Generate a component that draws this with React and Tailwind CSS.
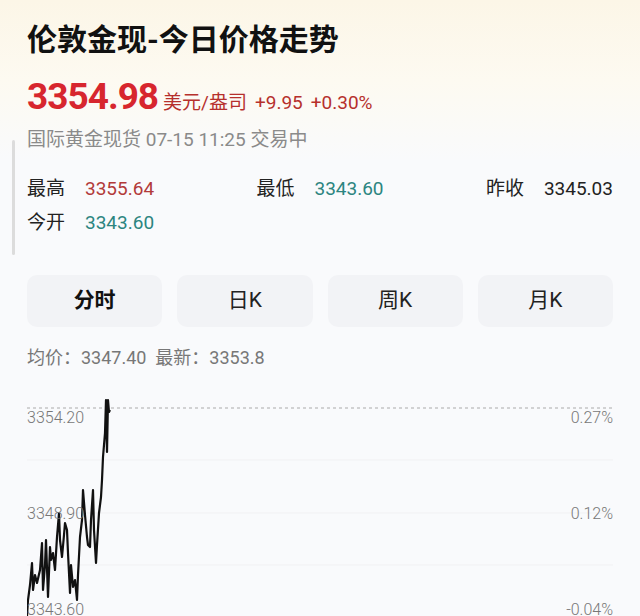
import React from 'react';

const font = { fontFamily: 'Roboto, "Noto Sans CJK SC", sans-serif' };

// 分时走势点位 (相对图表左上角)
const pts = [
    [0, 226], [1, 210], [3, 195], [5, 173], [6, 200], [8, 185], [10, 193], [13, 180], [15, 153],
    [16, 200], [18, 175], [19, 150], [21, 207], [23, 157], [24, 170], [26, 163], [28, 180],
    [30, 147], [32, 123], [33, 150], [35, 167], [37, 145], [38, 133], [40, 140], [41, 163],
    [43, 203], [44, 175], [46, 197], [48, 190], [50, 210], [51, 185], [53, 147], [55, 130],
    [56, 100], [58, 125], [60, 147], [61, 155], [63, 157], [64, 130], [66, 100], [67, 140],
    [69, 173], [70, 155], [72, 123], [74, 107], [75, 90], [76, 67], [78, 43], [79, 10],
    [80, 62], [81, 10], [82, 22], [83, 20],
];

const stats = [
    { label: '最高', value: '3355.64', color: 'text-[#b23a3a]' },
    { label: '最低', value: '3343.60', color: 'text-[#2c8580]' },
    { label: '昨收', value: '3345.03', color: 'text-[#222]' },
];

const tabs = ['分时', '日K', '周K', '月K'];

export default function App() {
    return (
        <div style={font} className="relative w-[640px] h-[616px] overflow-hidden bg-[#f9fafc]">
            <div className="absolute left-[12px] top-[140px] w-[3px] h-[115px] rounded bg-[#dcdcdc]" />

            <header className="bg-linear-to-b from-[#fcf6e7] via-[#fdfaf1] to-[#f9fafc] px-[27px] pt-[20px] pb-[6px]">
                <h1 className="text-[30px] leading-[40px] font-bold text-[#111]">伦敦金现-今日价格走势</h1>
                <div className="flex items-baseline gap-[5px] mt-[14px]">
                    <span className="text-[37px] leading-[46px] font-bold tracking-[-1px] text-[#d7262e]">3354.98</span>
                    <span className="text-[19px] text-[#b6302c]">美元/盎司</span>
                    <span className="text-[19px] text-[#b6302c] ml-[3px]">+9.95</span>
                    <span className="text-[19px] text-[#b6302c] ml-[3px]">+0.30%</span>
                </div>
                <p className="text-[19px] leading-[28px] text-[#8a8a8a] mt-[6px]">国际黄金现货 07-15 11:25 交易中</p>
            </header>

            <section className="px-[27px] pt-[12px]">
                <div className="flex justify-between h-[34px] items-center">
                    {stats.map((s) => (
                        <div key={s.label} className="flex items-center gap-[20px] text-[19px]">
                            <span className="text-[#222]">{s.label}</span>
                            <span className={s.color}>{s.value}</span>
                        </div>
                    ))}
                </div>
                <div className="flex h-[34px] items-center gap-[20px] text-[19px]">
                    <span className="text-[#222]">今开</span>
                    <span className="text-[#2c8580]">3343.60</span>
                </div>

                <div className="grid grid-cols-4 gap-[15px] mt-[35px]">
                    {tabs.map((t, i) => (
                        <div key={t} className={`h-[52px] rounded-[10px] bg-[#f2f3f6] flex items-center justify-center text-[21px] ${i === 0 ? 'font-bold text-[#111]' : 'text-[#222]'}`}>
                            {t}
                        </div>
                    ))}
                </div>

                <p className="text-[18px] leading-[28px] text-[#777] mt-[17px]">均价：3347.40&nbsp;&nbsp;最新：3353.8</p>

                <div className="relative h-[226px] mt-[18px]">
                    <svg width="586" height="226" className="absolute inset-0">
                        <line x1="0" y1="70" x2="586" y2="70" stroke="#f1f1f3" strokeWidth="1" />
                        <line x1="0" y1="123" x2="586" y2="123" stroke="#f1f1f3" strokeWidth="1" />
                        <line x1="0" y1="175" x2="586" y2="175" stroke="#f1f1f3" strokeWidth="1" />
                        <line x1="0" y1="18" x2="586" y2="18" stroke="#aaa" strokeWidth="1" strokeDasharray="3 3" />
                        <polyline points={pts.map((p) => p.join(',')).join(' ')} fill="none" stroke="#111" strokeWidth="2.2" strokeLinejoin="round" />
                    </svg>
                    <span className="absolute left-0 top-[18px] text-[16px] leading-[20px] font-light text-[#777]">3354.20</span>
                    <span className="absolute right-0 top-[18px] text-[16px] leading-[20px] font-light text-[#777]">0.27%</span>
                    <span className="absolute left-0 top-[114px] text-[16px] leading-[20px] font-light text-[#777]">3348.90</span>
                    <span className="absolute right-0 top-[114px] text-[16px] leading-[20px] font-light text-[#777]">0.12%</span>
                    <span className="absolute left-0 top-[210px] text-[16px] leading-[20px] font-light text-[#777]">3343.60</span>
                    <span className="absolute right-0 top-[210px] text-[16px] leading-[20px] font-light text-[#777]">-0.04%</span>
                </div>
            </section>
        </div>
    );
}
